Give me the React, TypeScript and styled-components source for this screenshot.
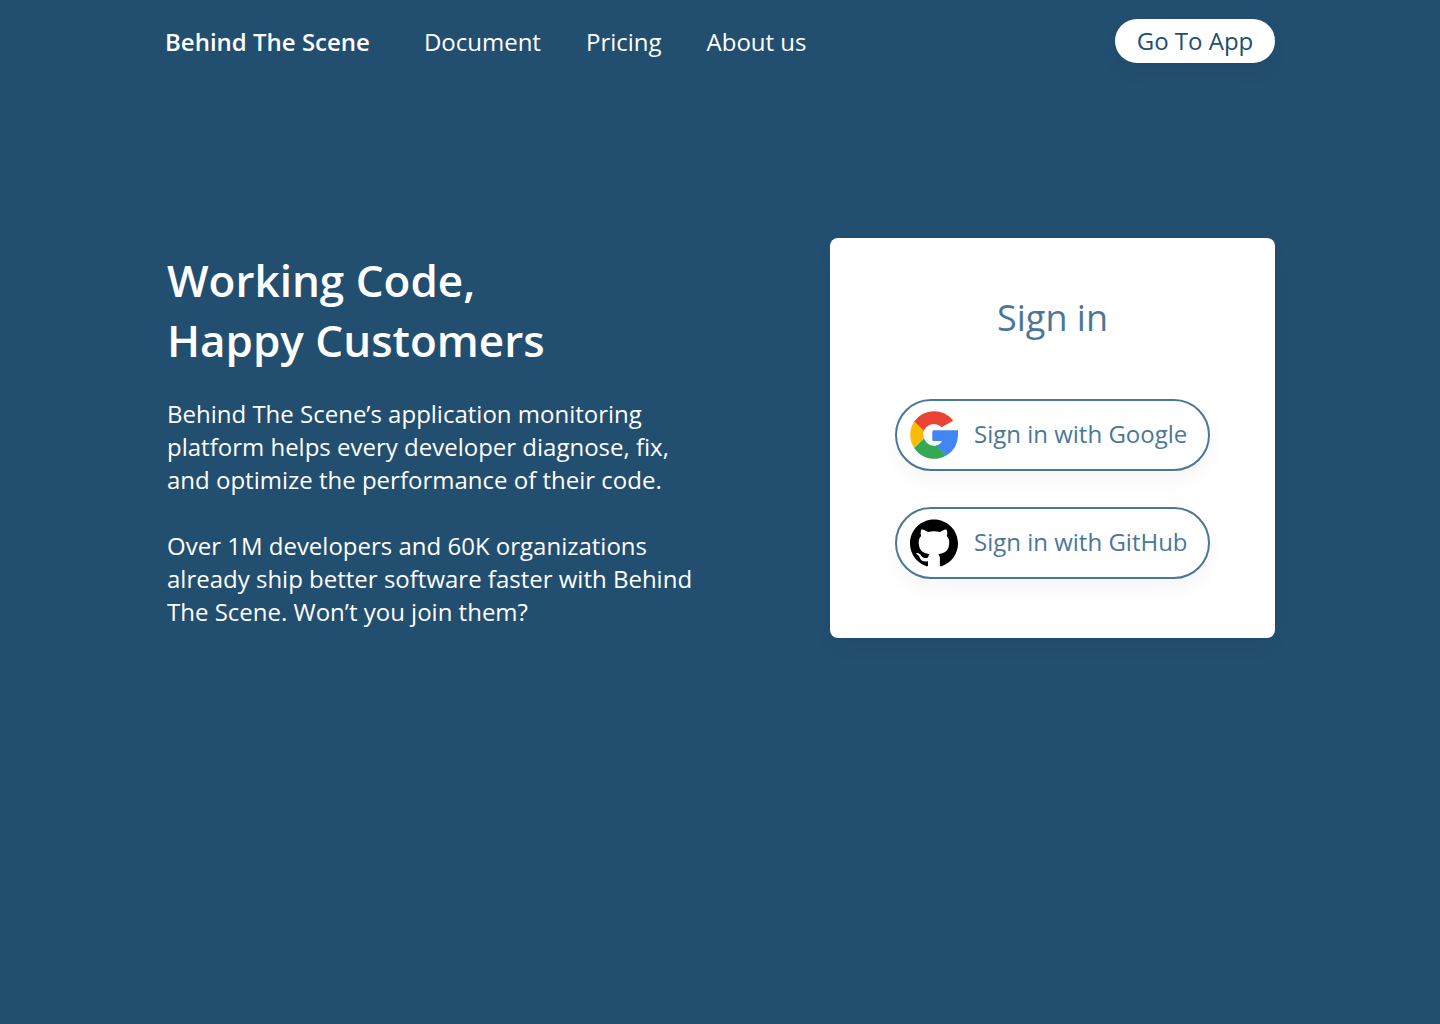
import React from "react";
import styled, { createGlobalStyle } from "styled-components";

const GlobalStyle = createGlobalStyle`
  * { box-sizing: border-box; }
  body {
    margin: 0;
    background: #224e70;
    color: #ffffff;
    font-family: "Open Sans", "Noto Sans", sans-serif;
    font-size: 24px;
    line-height: 33px;
  }
`;

const Page = styled.div`
  min-height: 100vh;
  max-width: 1110px;
  margin: 0 auto;
`;

const Header = styled.header`
  display: flex;
  align-items: center;
  justify-content: space-between;
  padding: 19px 0;
`;

const Nav = styled.nav`
  display: flex;
  align-items: center;
  gap: 45px;
`;

const Brand = styled.a`
  margin-right: 9px;
  color: inherit;
  font-weight: 600;
  text-decoration: none;
`;

const NavLink = styled.a`
  color: inherit;
  text-decoration: none;
`;

const AppButton = styled.button`
  height: 44px;
  width: 160px;
  padding: 0 0 2px;
  border: 0;
  border-radius: 22px;
  background: #ffffff;
  color: #224e70;
  font: inherit;
  cursor: pointer;
  box-shadow: 0 10px 20px rgba(0, 0, 0, 0.04);
`;

const Main = styled.main`
  display: flex;
  align-items: flex-start;
  justify-content: space-between;
  margin-top: 156px;
  padding-left: 2px;
`;

const Intro = styled.section`
  flex: 0 1 540px;
  padding-top: 12px;
`;

const Headline = styled.h1`
  margin: 0 0 27px;
  font-size: 44px;
  font-weight: 600;
  line-height: 60px;
`;

const Paragraph = styled.p`
  margin: 0 0 33px;
`;

const Card = styled.section`
  display: flex;
  flex-direction: column;
  align-items: center;
  flex: 0 0 445px;
  padding: 55px 65px 59px;
  border-radius: 8px;
  background: #ffffff;
  color: #4b7797;
  box-shadow: 0 10px 20px rgba(0, 0, 0, 0.04);
`;

const CardTitle = styled.h2`
  margin: 0 0 57px;
  font-size: 36px;
  font-weight: 400;
  line-height: 49px;
`;

const Providers = styled.div`
  display: grid;
  gap: 36px;
  width: 100%;
`;

const ProviderButton = styled.button`
  display: flex;
  align-items: center;
  gap: 16px;
  height: 72px;
  padding: 0 13px;
  border: 2px solid #4b7797;
  border-radius: 36px;
  background: #ffffff;
  color: inherit;
  font: inherit;
  white-space: nowrap;
  cursor: pointer;
  box-shadow: 0 10px 20px rgba(0, 0, 0, 0.04);
`;

const ProviderLabel = styled.span`
  padding-bottom: 3px;
`;

const Icon = styled.svg`
  flex: none;
  width: 48px;
  height: 48px;
`;

const GoogleIcon = () => (
  <Icon viewBox="0 0 48 48" aria-hidden="true">
    <path fill="#EA4335" d="M4.2 10.5A24 24 0 0 1 43.2 9.8L31.5 16.2A10.9 10.9 0 0 0 13.7 20Z" />
    <path fill="#FBBC05" d="M4.2 10.5A24 24 0 0 0 4.2 37L14 27.6A10.9 10.9 0 0 1 13.7 20Z" />
    <path fill="#34A853" d="M4.2 37A24 24 0 0 0 36 44.8L26.8 34.4A10.9 10.9 0 0 1 14 27.6Z" />
    <path fill="#4285F4" d="M23.8 19.2H48V24A24 24 0 0 1 36 44.8L26 34.6C28.8 34.1 30.8 32.6 32 30H23.8Q22.3 30 22.3 28.5V20.7Q22.3 19.2 23.8 19.2Z" />
  </Icon>
);

const GitHubIcon = () => (
  <Icon viewBox="0 0 24 24" aria-hidden="true">
    <path fill="#000000" d="M12 .297c-6.63 0-12 5.373-12 12 0 5.303 3.438 9.8 8.205 11.385.6.113.82-.258.82-.577 0-.285-.01-1.04-.015-2.04-3.338.724-4.042-1.61-4.042-1.61C4.422 18.07 3.633 17.7 3.633 17.7c-1.087-.744.084-.729.084-.729 1.205.084 1.838 1.236 1.838 1.236 1.07 1.835 2.809 1.305 3.495.998.108-.776.417-1.305.76-1.605-2.665-.3-5.466-1.332-5.466-5.93 0-1.31.465-2.38 1.235-3.22-.135-.303-.54-1.523.105-3.176 0 0 1.005-.322 3.3 1.23.96-.267 1.98-.399 3-.405 1.02.006 2.04.138 3 .405 2.28-1.552 3.285-1.23 3.285-1.23.645 1.653.24 2.873.12 3.176.765.84 1.23 1.91 1.23 3.22 0 4.61-2.805 5.625-5.475 5.92.42.36.81 1.096.81 2.22 0 1.606-.015 2.896-.015 3.286 0 .315.21.69.825.57C20.565 22.092 24 17.592 24 12.297c0-6.627-5.373-12-12-12" />
  </Icon>
);

export default function App() {
  return (
    <>
      <GlobalStyle />
      <Page>
        <Header>
          <Nav>
            <Brand href="#">Behind The Scene</Brand>
            <NavLink href="#document">Document</NavLink>
            <NavLink href="#pricing">Pricing</NavLink>
            <NavLink href="#about">About us</NavLink>
          </Nav>
          <AppButton type="button">Go To App</AppButton>
        </Header>
        <Main>
          <Intro>
            <Headline>
              Working Code,
              <br />
              Happy Customers
            </Headline>
            <Paragraph>
              Behind The Scene’s application monitoring platform helps every
              developer diagnose, fix, and optimize the performance of their
              code.
            </Paragraph>
            <Paragraph>
              Over 1M developers and 60K organizations already ship better
              software faster with Behind The Scene. Won’t you join them?
            </Paragraph>
          </Intro>
          <Card>
            <CardTitle>Sign in</CardTitle>
            <Providers>
              <ProviderButton type="button">
                <GoogleIcon />
                <ProviderLabel>Sign in with Google</ProviderLabel>
              </ProviderButton>
              <ProviderButton type="button">
                <GitHubIcon />
                <ProviderLabel>Sign in with GitHub</ProviderLabel>
              </ProviderButton>
            </Providers>
          </Card>
        </Main>
      </Page>
    </>
  );
}
